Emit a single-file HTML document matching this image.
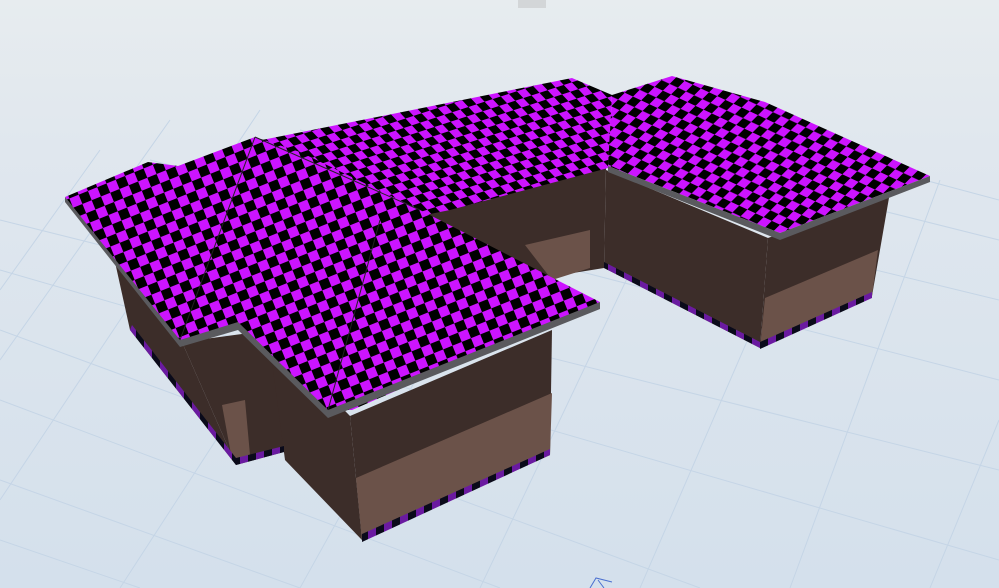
<!DOCTYPE html>
<html><head><meta charset="utf-8"><style>html,body{margin:0;padding:0;width:999px;height:588px;overflow:hidden;background:#dde5ec}</style></head><body>
<svg width="999" height="588" viewBox="0 0 999 588" xmlns="http://www.w3.org/2000/svg">
<defs>
<linearGradient id="bg" x1="0" y1="0" x2="0" y2="1"><stop offset="0" stop-color="#e7ecef"/><stop offset="0.25" stop-color="#e0e7ee"/><stop offset="1" stop-color="#d4e0ec"/></linearGradient>
<pattern id="ck1" width="17" height="17" patternUnits="userSpaceOnUse" patternTransform="rotate(-18) skewX(25)"><rect width="17" height="17" fill="#000"/><rect width="8.5" height="8.5" fill="#cc14ff"/><rect x="8.5" y="8.5" width="8.5" height="8.5" fill="#cc14ff"/></pattern>
<pattern id="ck2" width="18" height="18" patternUnits="userSpaceOnUse" patternTransform="rotate(25) skewX(-20)"><rect width="18" height="18" fill="#000"/><rect width="9" height="9" fill="#cc14ff"/><rect x="9" y="9" width="9" height="9" fill="#cc14ff"/></pattern>
<pattern id="ck3" width="20" height="20" patternUnits="userSpaceOnUse" patternTransform="rotate(-22)"><rect width="20" height="20" fill="#000"/><rect width="10" height="10" fill="#cc14ff"/><rect x="10" y="10" width="10" height="10" fill="#cc14ff"/></pattern>
<pattern id="ckb" width="16" height="16" patternUnits="userSpaceOnUse"><rect width="16" height="16" fill="#0a0a1a"/><rect width="8" height="16" fill="#6a1aa0"/></pattern>
</defs>
<rect width="999" height="588" fill="url(#bg)"/>
<g stroke="#c5d5e6" stroke-width="1" fill="none">
<path d="M0 270 L999 560 M0 220 L999 470 M0 330 L700 588 M0 400 L500 588 M0 480 L300 588 M150 160 L999 380 M300 130 L999 300 M500 115 L999 240 M700 120 L999 200 M0 540 L140 588"/>
<path d="M120 588 L430 110 M300 588 L560 120 M480 588 L700 125 M640 588 L830 150 M790 588 L940 180 M930 588 L999 420 M0 500 L260 110 M0 360 L170 120 M0 290 L100 150"/>
</g>
<rect x="518" y="0" width="28" height="8" fill="#d3d6d8"/>
<!-- middle back walls -->
<polygon points="420,212 606,168 604,268 455,292" fill="#3c2d29"/>
<polygon points="525,245 590,230 590,268 552,280" fill="#6b5249"/>
<!-- right wing walls -->
<polygon points="606,170 768,238 760,348 604,268" fill="#3c2d29"/>
<polygon points="768,238 890,192 872,296 760,348" fill="#3c2d29"/>
<polygon points="765,298 878,250 872,296 760,348" fill="#6b5249"/>
<polygon points="604,268 760,348 760,342 604,262" fill="url(#ckb)"/>
<polygon points="760,342 872,292 872,298 760,349" fill="url(#ckb)"/>
<!-- middle roof -->
<polygon points="262,140 572,78 612,95 608,168 450,210 400,220 300,160" fill="url(#ck1)"/>
<!-- right wing roof -->
<polygon points="612,95 672,76 765,102 930,176 780,233 608,166" fill="url(#ck2)"/>
<polygon points="608,166 780,233 930,176 930,182 780,240 608,172" fill="#5a5a5e"/>
<!-- left house walls -->
<polygon points="115,262 182,342 236,465 130,330" fill="#3c2d29"/>
<polygon points="182,342 272,330 284,452 236,465" fill="#3c2d29"/>
<polygon points="222,405 245,400 250,455 232,460" fill="#6b5249"/>
<polygon points="130,330 236,465 236,458 132,325" fill="url(#ckb)"/>
<polygon points="268,332 350,416 362,540 285,460" fill="#3c2d29"/>
<polygon points="350,416 552,330 550,455 362,540" fill="#3c2d29"/>
<polygon points="356,478 552,393 550,455 362,540" fill="#6b5249"/>
<polygon points="362,534 550,449 550,455 362,542" fill="url(#ckb)"/>
<polygon points="236,458 284,446 284,452 236,465" fill="url(#ckb)"/>
<!-- left roof -->
<polygon points="65,197 148,162 178,166 255,137 300,152 420,210 600,302 352,410 328,410 238,325 180,342" fill="url(#ck3)"/>
<polygon points="65,197 180,340 238,322 328,410 600,302 600,309 328,418 238,330 180,347 65,202" fill="#5a5a5e"/>
<path d="M255 137 L180 340 M255 137 L420 210 M380 220 L328 410" stroke="#222" stroke-width="1" fill="none"/>
<g stroke="#4a6fd0" fill="none" stroke-width="1"><path d="M590 588 L596 578 L612 582 M598 580 L604 588"/></g>
</svg>
</body></html>
